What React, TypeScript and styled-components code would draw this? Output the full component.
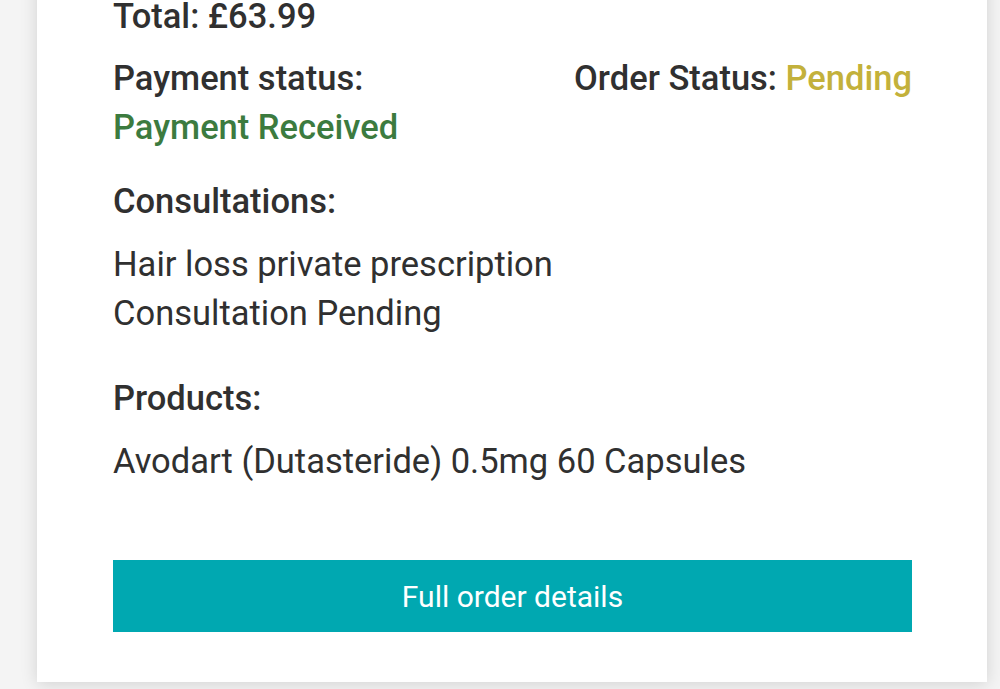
import styled, { createGlobalStyle } from "styled-components";

const GlobalStyle = createGlobalStyle`
  html {
    overflow: hidden;
  }
  html, body {
    margin: 0;
    padding: 0;
    background: #f4f4f4;
  }
  body {
    font-family: Roboto, "Liberation Sans", sans-serif;
    color: #303030;
  }
`;

const Page = styled.div`
  width: 1000px;
  padding: 1px 0 40px 37px;
  box-sizing: border-box;
`;

const Card = styled.div`
  width: 950px;
  margin-top: -21px;
  padding: 11.5px 75px 50px 76px;
  box-sizing: border-box;
  background: #ffffff;
  box-shadow: 0 2px 16px rgba(0, 0, 0, 0.14);
`;

const Line = styled.div<{ $bold?: boolean; $color?: string; $gap?: number }>`
  font-size: 34.5px;
  line-height: 49px;
  font-weight: ${(p) => (p.$bold ? 500 : 400)};
  color: ${(p) => p.$color || "#303030"};
  margin-top: ${(p) => p.$gap || 0}px;
  white-space: nowrap;
`;

const StatusRow = styled.div`
  display: flex;
  justify-content: space-between;
  align-items: flex-start;
  margin-top: 13px;
`;

const Accent = styled.span<{ $color: string }>`
  color: ${(p) => p.$color};
`;

const Button = styled.button`
  display: block;
  width: 100%;
  height: 72px;
  margin-top: 74.5px;
  border: none;
  border-radius: 0;
  background: #00a8b1;
  color: #ffffff;
  font-family: Roboto, "Liberation Sans", sans-serif;
  font-size: 30px;
  font-weight: 400;
  cursor: pointer;
`;

const GREEN = "#3c7b3f";
const YELLOW = "#c3b13b";

export default function App() {
  return (
    <>
      <GlobalStyle />
      <Page>
        <Card>
          <Line $bold>Total: £63.99</Line>
          <StatusRow>
            <div>
              <Line $bold>Payment status:</Line>
              <Line $bold $color={GREEN}>
                Payment Received
              </Line>
            </div>
            <Line $bold>
              Order Status: <Accent $color={YELLOW}>Pending</Accent>
            </Line>
          </StatusRow>
          <Line $bold $gap={25}>
            Consultations:
          </Line>
          <Line $gap={14}>Hair loss private prescription</Line>
          <Line>Consultation Pending</Line>
          <Line $bold $gap={36}>
            Products:
          </Line>
          <Line $gap={14}>Avodart (Dutasteride) 0.5mg 60 Capsules</Line>
          <Button>Full order details</Button>
        </Card>
      </Page>
    </>
  );
}
